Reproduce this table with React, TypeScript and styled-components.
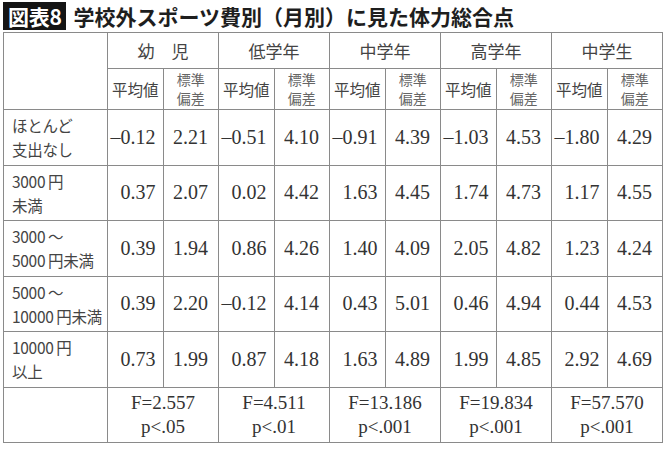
import React from 'react'
import styled, { createGlobalStyle } from 'styled-components'

const GlobalStyle = createGlobalStyle`
  html, body {
    margin: 0;
    padding: 0;
    background: #fff;
  }
`

const Page = styled.div`
  width: 670px;
  height: 449px;
  padding: 2px 0 0 3px;
  box-sizing: border-box;
  background: #fff;
  overflow: hidden;
`

const TitleBar = styled.div`
  display: flex;
  align-items: center;
  gap: 8px;
  height: 28px;
  margin-bottom: 2px;
`

const Label = styled.span`
  display: flex;
  align-items: center;
  height: 28px;
  padding: 0 4px 0 5px;
  background: #141414;
  color: #fff;
  font-family: 'Noto Sans CJK JP', sans-serif;
  font-weight: 700;
  font-size: 21px;
  letter-spacing: -0.3px;
`

const Title = styled.h1`
  margin: 0;
  font-family: 'Noto Sans CJK JP', sans-serif;
  font-weight: 700;
  font-size: 21px;
  color: #1e1e1e;
`

const Table = styled.table`
  width: 660px;
  border-collapse: collapse;
  table-layout: fixed;
  color: #333;
  font-family: 'Liberation Serif', 'Noto Sans CJK JP', serif;

  td,
  th {
    border: 1px solid #8a8a8a;
    padding: 0;
    font-weight: 400;
  }
`

const HeadRow = styled.tr<{ $h: number }>`
  height: ${({ $h }) => $h}px;
`

const BodyRow = styled.tr`
  height: 55.5px;
`

const GroupHead = styled.th`
  font-family: 'Noto Sans CJK JP', sans-serif;
  font-size: 17px;
  color: #444;
  text-align: center;
  white-space: pre;
`

const SubHead = styled.th<{ $small?: boolean }>`
  font-family: 'Noto Sans CJK JP', sans-serif;
  font-size: ${({ $small }) => ($small ? '14px' : '15.5px')};
  line-height: ${({ $small }) => ($small ? '19px' : '20px')};
  color: ${({ $small }) => ($small ? '#666' : '#444')};
  text-align: center;
`

const RowLabel = styled.td`
  padding-left: 8px !important;
  font-family: 'Noto Sans CJK JP', sans-serif;
  font-size: 15.5px;
  line-height: 24px;
  color: #444;
  text-align: left;
  vertical-align: middle;
  white-space: nowrap;
  letter-spacing: -0.3px;
`

const Value = styled.td<{ $sd?: boolean }>`
  font-size: 20px;
  text-align: right;
  padding-right: ${({ $sd }) => ($sd ? '10px' : '7px')} !important;
  vertical-align: middle;
`

const Stat = styled.td`
  font-size: 19px;
  line-height: 24px;
  text-align: center;
  vertical-align: middle;
`

const groups = ['幼　児', '低学年', '中学年', '高学年', '中学生']

const rows: { label: string[]; values: string[] }[] = [
  { label: ['ほとんど', '支出なし'], values: ['–0.12', '2.21', '–0.51', '4.10', '–0.91', '4.39', '–1.03', '4.53', '–1.80', '4.29'] },
  { label: ['3000\u2009円', '未満'], values: ['0.37', '2.07', '0.02', '4.42', '1.63', '4.45', '1.74', '4.73', '1.17', '4.55'] },
  { label: ['3000\u2009～', '5000\u2009円未満'], values: ['0.39', '1.94', '0.86', '4.26', '1.40', '4.09', '2.05', '4.82', '1.23', '4.24'] },
  { label: ['5000\u2009～', '10000\u2009円未満'], values: ['0.39', '2.20', '–0.12', '4.14', '0.43', '5.01', '0.46', '4.94', '0.44', '4.53'] },
  { label: ['10000\u2009円', '以上'], values: ['0.73', '1.99', '0.87', '4.18', '1.63', '4.89', '1.99', '4.85', '2.92', '4.69'] },
]

const stats = [
  ['F=2.557', 'p<.05'],
  ['F=4.511', 'p<.01'],
  ['F=13.186', 'p<.001'],
  ['F=19.834', 'p<.001'],
  ['F=57.570', 'p<.001'],
]

export default function App() {
  return (
    <Page>
      <GlobalStyle />
      <TitleBar>
        <Label>図表8</Label>
        <Title>学校外スポーツ費別（月別）に見た体力総合点</Title>
      </TitleBar>
      <Table>
        <colgroup>
          <col style={{ width: 104 }} />
          {Array.from({ length: 10 }).map((_, i) => (
            <col key={i} />
          ))}
        </colgroup>
        <thead>
          <HeadRow $h={36}>
            <GroupHead rowSpan={2} />
            {groups.map((g) => (
              <GroupHead key={g} colSpan={2}>
                {g}
              </GroupHead>
            ))}
          </HeadRow>
          <HeadRow $h={41}>
            {groups.map((g) => (
              <React.Fragment key={g}>
                <SubHead>平均値</SubHead>
                <SubHead $small>
                  標準
                  <br />
                  偏差
                </SubHead>
              </React.Fragment>
            ))}
          </HeadRow>
        </thead>
        <tbody>
          {rows.map((r) => (
            <BodyRow key={r.label.join('')}>
              <RowLabel>
                {r.label[0]}
                <br />
                {r.label[1]}
              </RowLabel>
              {r.values.map((v, i) => (
                <Value key={i} $sd={i % 2 === 1}>
                  {v}
                </Value>
              ))}
            </BodyRow>
          ))}
          <BodyRow>
            <Stat />
            {stats.map((s) => (
              <Stat key={s[0]} colSpan={2}>
                {s[0]}
                <br />
                {s[1]}
              </Stat>
            ))}
          </BodyRow>
        </tbody>
      </Table>
    </Page>
  )
}
